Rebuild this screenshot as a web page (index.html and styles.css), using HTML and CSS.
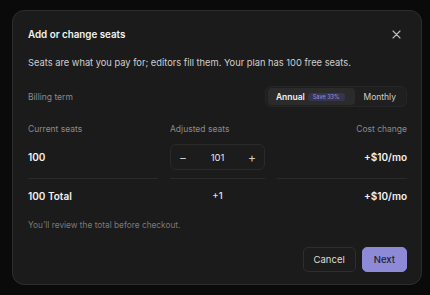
FILE: index.html
```html
<!DOCTYPE html>
<html lang="en">
<head>
    <meta charset="UTF-8">
    <meta name="viewport" content="width=device-width, initial-scale=1.0">
    <title>Add or change seats</title>
    <link rel="stylesheet" href="styles.css">
</head>
<body>
    <div class="dialog">
        <div class="dialog-header">
            <h2>Add or change seats</h2>
            <button class="close" aria-label="Close">
                <svg width="9" height="9" viewBox="0 0 9 9"><path d="M1 1L8 8M8 1L1 8" stroke="#bdbdbd" stroke-width="1.1" stroke-linecap="round"/></svg>
            </button>
        </div>
        <p class="intro">Seats are what you pay for; editors fill them. Your plan has 100 free seats.</p>

        <div class="billing">
            <span class="label">Billing term</span>
            <div class="segmented">
                <button class="seg active">Annual <span class="badge">Save 33%</span></button>
                <button class="seg">Monthly</button>
            </div>
        </div>

        <div class="seats">
            <span class="label">Current seats</span>
            <span class="label">Adjusted seats</span>
            <span class="label right">Cost change</span>

            <span class="value cell">100</span>
            <div class="cell">
                <div class="stepper">
                    <button class="step">&minus;</button>
                    <span>101</span>
                    <button class="step">+</button>
                </div>
            </div>
            <span class="value cell right">+$10/mo</span>

            <span class="value">100 Total</span>
            <span class="delta">+1</span>
            <span class="value right">+$10/mo</span>
        </div>

        <p class="note">You'll review the total before checkout.</p>

        <div class="actions">
            <button class="btn">Cancel</button>
            <button class="btn primary">Next</button>
        </div>
    </div>
</body>
</html>
```

FILE: styles.css
```css
body {
    margin: 0;
    padding: 10px 8px 10px 12px;
    background-color: #0a0a0a;
    font-family: Inter, "Noto Sans", sans-serif;
    color: #e8e8e8;
}
button {
    font-family: inherit;
    cursor: pointer;
}
.dialog {
    width: 410px;
    height: 275px;
    box-sizing: border-box;
    background-color: #1b1b1b;
    border: 1px solid #2e2e2e;
    border-radius: 12px;
    padding: 15px 14px 12px 15px;
}
.dialog-header {
    display: flex;
    align-items: center;
    justify-content: space-between;
    height: 16px;
}
h2 {
    margin: 0;
    font-size: 9.8px;
    font-weight: 600;
    color: #f2f2f2;
}
.close {
    background: none;
    border: none;
    padding: 0;
    width: 16px;
    height: 16px;
    display: flex;
    align-items: center;
    justify-content: center;
    margin-right: 3px;
}
.intro {
    margin: 14px 0 0;
    font-size: 9.3px;
    line-height: 14px;
    color: #cfcfcf;
}
.label {
    font-size: 8.5px;
    line-height: 14px;
    color: #8a8a8a;
}
.right { text-align: right; }
.billing {
    margin-top: 16px;
    display: flex;
    align-items: center;
    justify-content: space-between;
}
.segmented {
    display: flex;
    align-items: center;
    height: 21px;
    box-sizing: border-box;
    padding: 2px;
    background-color: #1f1f1f;
    border: 1px solid #262626;
    border-radius: 6px;
}
.seg {
    height: 17px;
    background: none;
    border: none;
    border-radius: 4px;
    color: #cfcfcf;
    font-size: 8.5px;
    padding: 0 8px 0 9px;
    display: flex;
    align-items: center;
    gap: 3px;
}
.seg.active {
    background-color: #2b2b2b;
    color: #f0f0f0;
    font-weight: 600;
    padding: 0 10px 0 8px;
}
.badge {
    font-size: 5.5px;
    font-weight: 500;
    color: #8c88d0;
    background-color: #35354f;
    border-radius: 3px;
    padding: 1px 5px;
}
.seats {
    margin-top: 15px;
    display: grid;
    grid-template-columns: 1fr 95px 1fr;
    column-gap: 12px;
    align-items: center;
}
.cell {
    margin-top: 8px;
    padding-bottom: 8px;
    border-bottom: 1px solid #2a2a2a;
    align-self: stretch;
    display: flex;
    align-items: center;
}
.cell.right { justify-content: flex-end; }
.value {
    font-size: 10px;
    font-weight: 600;
    color: #f2f2f2;
    line-height: 16px;
}
.seats > .value:not(.cell), .delta {
    margin-top: 9px;
}
.delta {
    font-size: 9.5px;
    font-weight: 500;
    color: #e0e0e0;
    text-align: center;
    line-height: 16px;
}
.stepper {
    width: 95px;
    height: 26px;
    box-sizing: border-box;
    border: 1px solid #2a2a2a;
    border-radius: 6px;
    background-color: #1c1c1c;
    display: flex;
    align-items: center;
    justify-content: space-between;
    padding: 0 5px;
    font-size: 9.5px;
    color: #e6e6e6;
}
.step {
    background: none;
    border: none;
    color: #cfcfcf;
    font-size: 12px;
    width: 14px;
    padding: 0;
}
.note {
    margin: 14px 0 0;
    font-size: 8.3px;
    line-height: 14px;
    color: #7a7a7a;
}
.actions {
    margin-top: 15px;
    display: flex;
    justify-content: flex-end;
    gap: 6px;
}
.btn {
    height: 25px;
    box-sizing: border-box;
    border-radius: 5px;
    font-size: 9.5px;
    padding: 0 10px;
    background-color: #1c1c1c;
    border: 1px solid #2e2e2e;
    color: #dcdcdc;
}
.btn.primary {
    background-color: #8d8ad8;
    border-color: #8d8ad8;
    color: #1e1e2e;
    font-weight: 500;
    padding: 0 11px;
}
```
